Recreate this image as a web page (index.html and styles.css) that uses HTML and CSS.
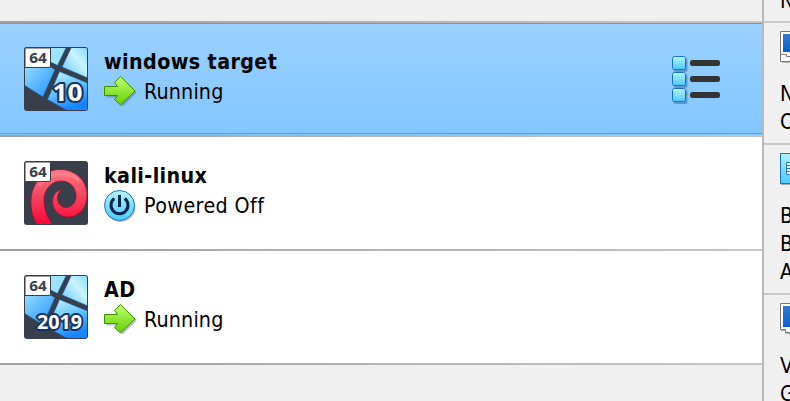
FILE: index.html
```html
<!DOCTYPE html>
<html lang="en">
<head>
<meta charset="utf-8">
<title>Virtual machines</title>
<link rel="stylesheet" href="styles.css">
</head>
<body>
<svg class="defs" aria-hidden="true">
  <defs>
    <linearGradient id="pane" x1="0" y1="0" x2="0.4" y2="1"><stop offset="0" stop-color="#d2f6ff"/><stop offset=".45" stop-color="#74ceff"/><stop offset="1" stop-color="#1585ff"/></linearGradient>
    <linearGradient id="pane1" x1="1" y1="0" x2="0" y2="1"><stop offset="0" stop-color="#7fd8ff"/><stop offset=".4" stop-color="#c9f4ff"/><stop offset="1" stop-color="#64c2ff"/></linearGradient>
    <linearGradient id="pane2" x1="0" y1="0" x2=".7" y2="1"><stop offset="0" stop-color="#b4eeff"/><stop offset="1" stop-color="#309cff"/></linearGradient>
    <linearGradient id="green" x1="0" y1="0" x2="0" y2="1"><stop offset="0" stop-color="#bdff73"/><stop offset="1" stop-color="#67cf00"/></linearGradient>
    <linearGradient id="cyan" x1="0" y1="0" x2="0" y2="1"><stop offset="0" stop-color="#b5f3ff"/><stop offset="1" stop-color="#4acaff"/></linearGradient>
    <linearGradient id="red" x1="0" y1="0" x2="0" y2="1"><stop offset="0" stop-color="#ff7985"/><stop offset=".45" stop-color="#f34861"/><stop offset="1" stop-color="#ff0037"/></linearGradient>
    <linearGradient id="screen" x1="0" y1="0" x2="0" y2="1"><stop offset="0" stop-color="#3478d3"/><stop offset="1" stop-color="#0062d5"/></linearGradient>
    <clipPath id="tile"><rect x="1" y="1" width="62" height="62" rx="1.5"/></clipPath>
    <symbol id="windows" viewBox="0 0 64 64">
      <rect width="64" height="64" rx="3" fill="#383e4a"/>
      <g clip-path="url(#tile)" stroke="#155cae" stroke-width=".7">
        <path d="M0 0H42.500L33.500 18.500L0 2Z" fill="#9de3ff"/>
        <path d="M47.500 0H65V31.500L38 20Z" fill="url(#pane1)"/>
        <path d="M0 6L31 22.500L19 50L0 38Z" fill="url(#pane2)"/>
        <path d="M35.500 24.500L65 36.500V64H44L23.500 52.500Z" fill="url(#pane)"/>
      </g>
    </symbol>
    <symbol id="badge" viewBox="0 0 64 64">
      <path d="M1 1H26.500V19Q26.500 20.500 25 20.500H1Z" fill="#fff" stroke="#383e4a"/>
      <text class="bits" x="5.2" y="16" textLength="17.500" lengthAdjust="spacingAndGlyphs">64</text>
    </symbol>
    <symbol id="arrow" viewBox="0 0 34 34">
      <path d="M1.5 11.5H14.5L11.5 8L18 1.5L32 15.5L18 29.5L11.5 23.5L14.5 20.5H1.5Z" transform="translate(.8 1)" fill="#38516c" opacity=".35"/>
      <path d="M.5 10.500H13.5L10.5 6.500L16.5 .500L31 15L16.5 29L10.5 23.500L13.5 19.500H.5Z" fill="url(#green)" stroke="#3b9000"/>
    </symbol>
  </defs>
</svg>
<div class="manager">
  <main class="machines">
    <div class="strip"></div>
    <section class="machine selected">
      <svg class="os" viewBox="0 0 64 64"><use href="#windows"/><use href="#badge"/><text class="version" x="28.5" y="54" font-size="24" textLength="30" lengthAdjust="spacingAndGlyphs">10</text></svg>
      <div class="info"><h2>windows target</h2><div class="state"><svg class="status" viewBox="0 0 34 34"><use href="#arrow"/></svg><span class="running">Running</span></div></div>
      <svg class="menu" viewBox="0 0 50 50">
        <g fill="#316895" opacity=".5"><rect x="1.5" y="2" width="14" height="14" rx="2"/><rect x="1.5" y="18" width="14" height="14" rx="2"/><rect x="1.5" y="34" width="14" height="14" rx="2"/></g>
        <g fill="url(#cyan)" stroke="#1671d5"><rect x=".5" y=".5" width="13" height="13" rx="2"/><rect x=".5" y="16.5" width="13" height="13" rx="2"/><rect x=".5" y="32.5" width="13" height="13" rx="2"/></g>
        <g fill="#333"><rect x="18" y="4" width="30" height="6" rx="2.5"/><rect x="18" y="20" width="30" height="6" rx="2.5"/><rect x="18" y="36" width="30" height="6" rx="2.5"/></g>
      </svg>
    </section>
    <section class="machine">
      <svg class="os" viewBox="0 0 64 64">
        <rect width="64" height="64" rx="3" fill="#383e4a"/>
        <g clip-path="url(#tile)"><path d="M14 65C9 58 6.500 49 7 39C8 21 20 8.500 36 8.500C51 8.500 63 19 63 34C63 47 55 56 44.500 56C35 56 28.500 49 28.500 41C28.500 34 32 30 37.500 28.500C34.500 31 33.500 34 33.500 37C33.500 42 37 46.500 42 46.500C48 46.500 52 41 52 35C52 26 45.500 20 37 20C27 20 20 29 20 39C20 48 23 57 30 65Z" fill="url(#red)" stroke="#a80c2d" stroke-width=".8"/><path d="M15 25C23 12 43 8 55 20" fill="none" stroke="#ff9ca4" stroke-width="3" opacity=".4"/></g>
        <use href="#badge"/>
      </svg>
      <div class="info"><h2>kali-linux</h2><div class="state"><svg class="status" viewBox="0 0 34 34"><circle cx="16.5" cy="17" r="15" fill="#526878" opacity=".4"/><circle cx="15.5" cy="15.5" r="15" fill="url(#cyan)" stroke="#2473c5"/><path d="M10.2 8.5A8.5 8.5 0 1 0 20.8 8.5M15.5 5V17" fill="none" stroke="#06264f" stroke-width="3"/></svg><span class="off">Powered Off</span></div></div>
    </section>
    <section class="machine">
      <svg class="os" viewBox="0 0 64 64"><use href="#windows"/><use href="#badge"/><text class="version" x="13" y="54" font-size="20" textLength="45" lengthAdjust="spacingAndGlyphs">2019</text></svg>
      <div class="info"><h2>AD</h2><div class="state"><svg class="status" viewBox="0 0 34 34"><use href="#arrow"/></svg><span class="running">Running</span></div></div>
    </section>
  </main>
  <aside class="details">
    <section class="card top"><p>N</p></section>
    <section class="card general"><svg class="device" viewBox="0 0 32 32"><path d="M2 2H32V32H2Z" fill="#bbb"/><path d="M.5 .5H32V30.5H.5Z" fill="#fff" stroke="#777"/><path d="M3 3H32V21H3Z" fill="url(#screen)"/><path d="M.5 23.5H6.5V25.5H32" fill="none" stroke="#777"/></svg><p>N</p><p>O</p></section>
    <section class="card system"><svg class="device" viewBox="0 0 32 32"><path d="M1 2H32V32H1Z" fill="#aaa"/><path d="M.5 .5H32V30.5H.5Z" fill="url(#cyan)" stroke="#1671d5"/><path d="M32 9.500H6.500V21.500H32" fill="#f5fdff" stroke="#2878bd"/><path d="M7 12.500H32M7 15.500H32M7 18.500H32" stroke="#2878bd"/></svg><p>B</p><p>B</p><p>A</p></section>
    <section class="card display"><svg class="device" viewBox="0 0 32 32"><path d="M1 27.500H6V30.500H32" fill="none" stroke="#aaa"/><path d="M.5 .5H32V29.500H5.500V26.500H.5Z" fill="#fff" stroke="#777"/><path d="M3 3H32V24H3Z" fill="url(#screen)"/></svg><p>V</p><p>G</p></section>
  </aside>
</div>
</body>
</html>
```
FILE: styles.css
```css
* { box-sizing: border-box; }
body { margin: 0; overflow: hidden; background: #f0f0f0; color: #000; font: 21.3px/28px "DejaVu Sans Condensed", "DejaVu Sans", sans-serif; font-stretch: condensed; }
.defs { position: absolute; width: 0; height: 0; }
.manager { display: grid; grid-template-columns: 762px 1fr; width: 790px; height: 401px; overflow: hidden; }
.machines { min-width: 0; }
.strip, .machine { border-bottom: 2px solid; border-image: linear-gradient(90deg, #a0a0a0, #c6c6c6) 1; }
.strip { height: 23px; }
.machine { display: flex; height: 114px; padding: 24px 42px 0 24px; background: #fff; background-clip: padding-box; }
.selected { background: linear-gradient(#3da5fc 0 1px, transparent 1px 110px, #3da5fc 110px 111px, transparent 111px), linear-gradient(#9ad1ff, #82c6ff); }
.os { width: 64px; height: 64px; flex: none; }
.info { margin-left: 16px; flex: 1; }
h2 { margin: 0; height: 29px; font-size: 21.3px; line-height: 29px; letter-spacing: .38px; white-space: nowrap; }
.state { display: flex; gap: 6px; height: 34px; line-height: 31px; white-space: nowrap; }
.running { letter-spacing: .15px; }
.off { letter-spacing: .4px; }
.status { width: 34px; height: 34px; flex: none; }
.menu { width: 50px; height: 50px; margin: 9px -2px 0 0; }
.bits { font: bold 15px "Noto Sans", sans-serif; fill: #383e4a; }
.version { font-family: "Noto Sans", sans-serif; font-weight: bold; fill: #fff; stroke: #173361; stroke-width: 4px; paint-order: stroke; stroke-linejoin: round; }
.details { border-left: 2px solid #b9b9b9; overflow: hidden; }
.card { border-bottom: 2px solid #c9c9c9; padding: 8px 0 0 16px; }
.card p { margin: 0; width: 20px; height: 28px; line-height: 28px; }
.device { display: block; width: 32px; height: 32px; margin-bottom: 17px; }
.top { display: flex; align-items: flex-end; height: 23px; padding-top: 0; padding-bottom: 6px; }
.general { height: 122px; }
.system { height: 150px; }
.display { height: 122px; }
```
